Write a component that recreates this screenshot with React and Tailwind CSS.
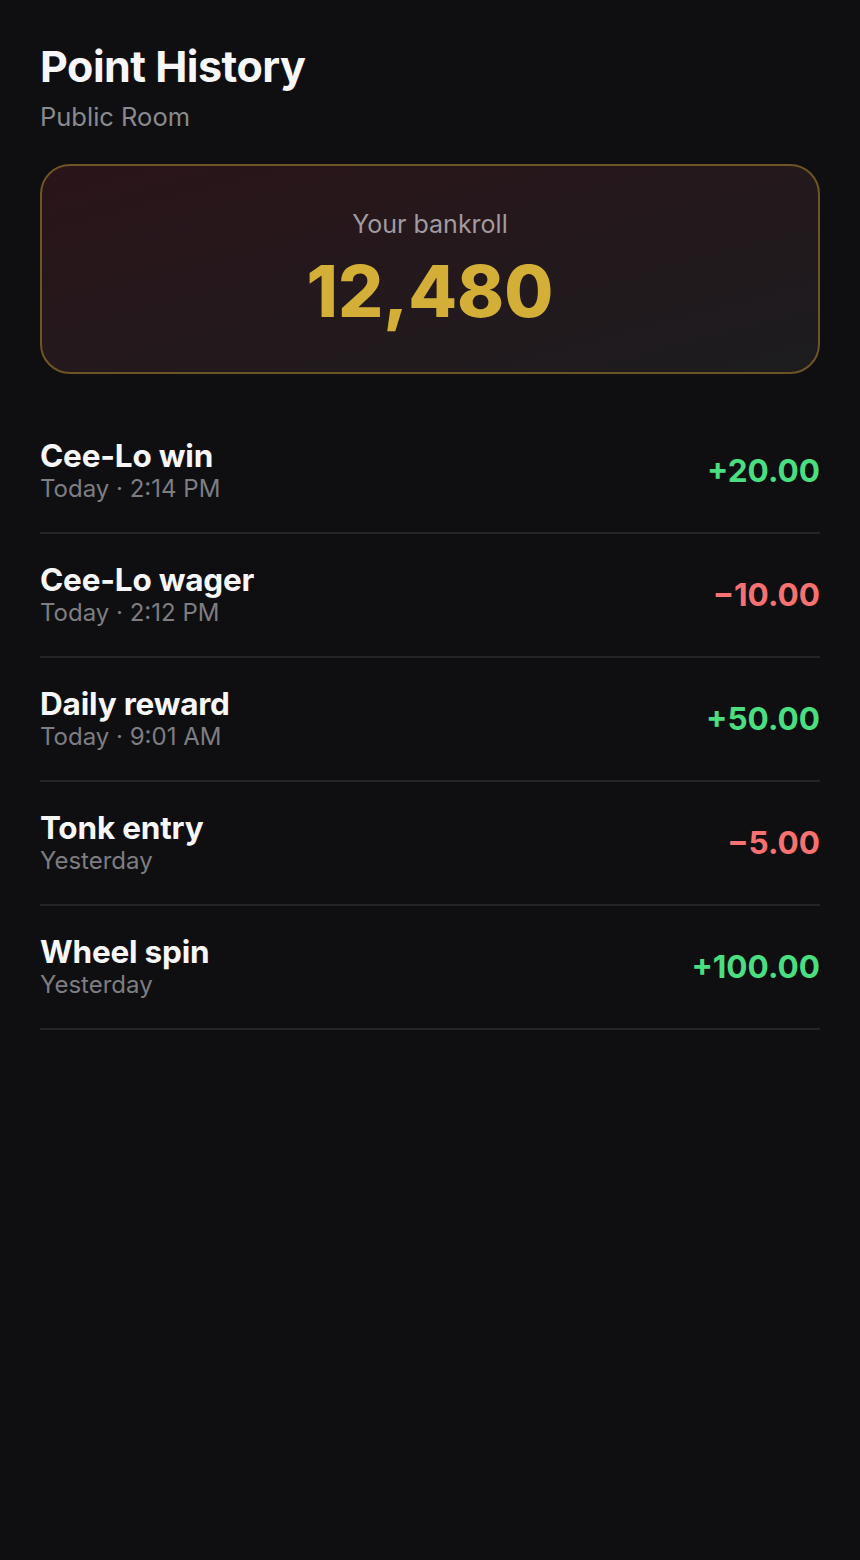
const history = [
  { title: "Cee-Lo win", when: "Today · 2:14 PM", amount: 20 },
  { title: "Cee-Lo wager", when: "Today · 2:12 PM", amount: -10 },
  { title: "Daily reward", when: "Today · 9:01 AM", amount: 50 },
  { title: "Tonk entry", when: "Yesterday", amount: -5 },
  { title: "Wheel spin", when: "Yesterday", amount: 100 },
];

function fmt(n) {
  const abs = Math.abs(n).toFixed(2);
  return n < 0 ? `\u2212${abs}` : `+${abs}`;
}

export default function App() {
  return (
    <div
      className="min-h-screen bg-[#0f0f11] text-white"
      style={{ fontFamily: "Inter, 'Noto Sans', sans-serif" }}
    >
      <div className="px-10 pt-[40px]">
        <div className="text-[43px] font-bold leading-[52px] tracking-[-0.5px] text-[#f7f7f9]">
          Point History
        </div>
        <div className="mt-[8px] text-[25.5px] leading-[34px] text-[#8a8a8e]">Public Room</div>

        {/* bankroll card */}
        <div className="mt-[30px] flex h-[210px] flex-col items-center justify-center rounded-[30px] border-2 border-[#6e5526] bg-gradient-to-br from-[#2a1419] to-[#1c1c1f]">
          <div className="text-[25px] leading-[32px] text-[#a19ba0]">Your bankroll</div>
          <div className="mt-[11px] text-[71px] font-extrabold leading-[80px] text-[#d4af37]">
            12,480
          </div>
        </div>

        <div className="mt-[36px]">
          {history.map((h) => (
            <div
              key={h.title}
              className="flex h-[124px] items-center justify-between border-b-2 border-[#242427]"
            >
              <div>
                <div className="text-[31.5px] font-bold leading-[36px] tracking-[-0.2px] text-[#f7f7f9]">
                  {h.title}
                </div>
                <div className="text-[24px] leading-[30px] text-[#7d7d82]">{h.when}</div>
              </div>
              <div
                className={
                  h.amount < 0
                    ? "text-[31.5px] font-bold text-[#f87171]"
                    : "text-[31.5px] font-bold text-[#4ade80]"
                }
              >
                {fmt(h.amount)}
              </div>
            </div>
          ))}
        </div>
      </div>
    </div>
  );
}
